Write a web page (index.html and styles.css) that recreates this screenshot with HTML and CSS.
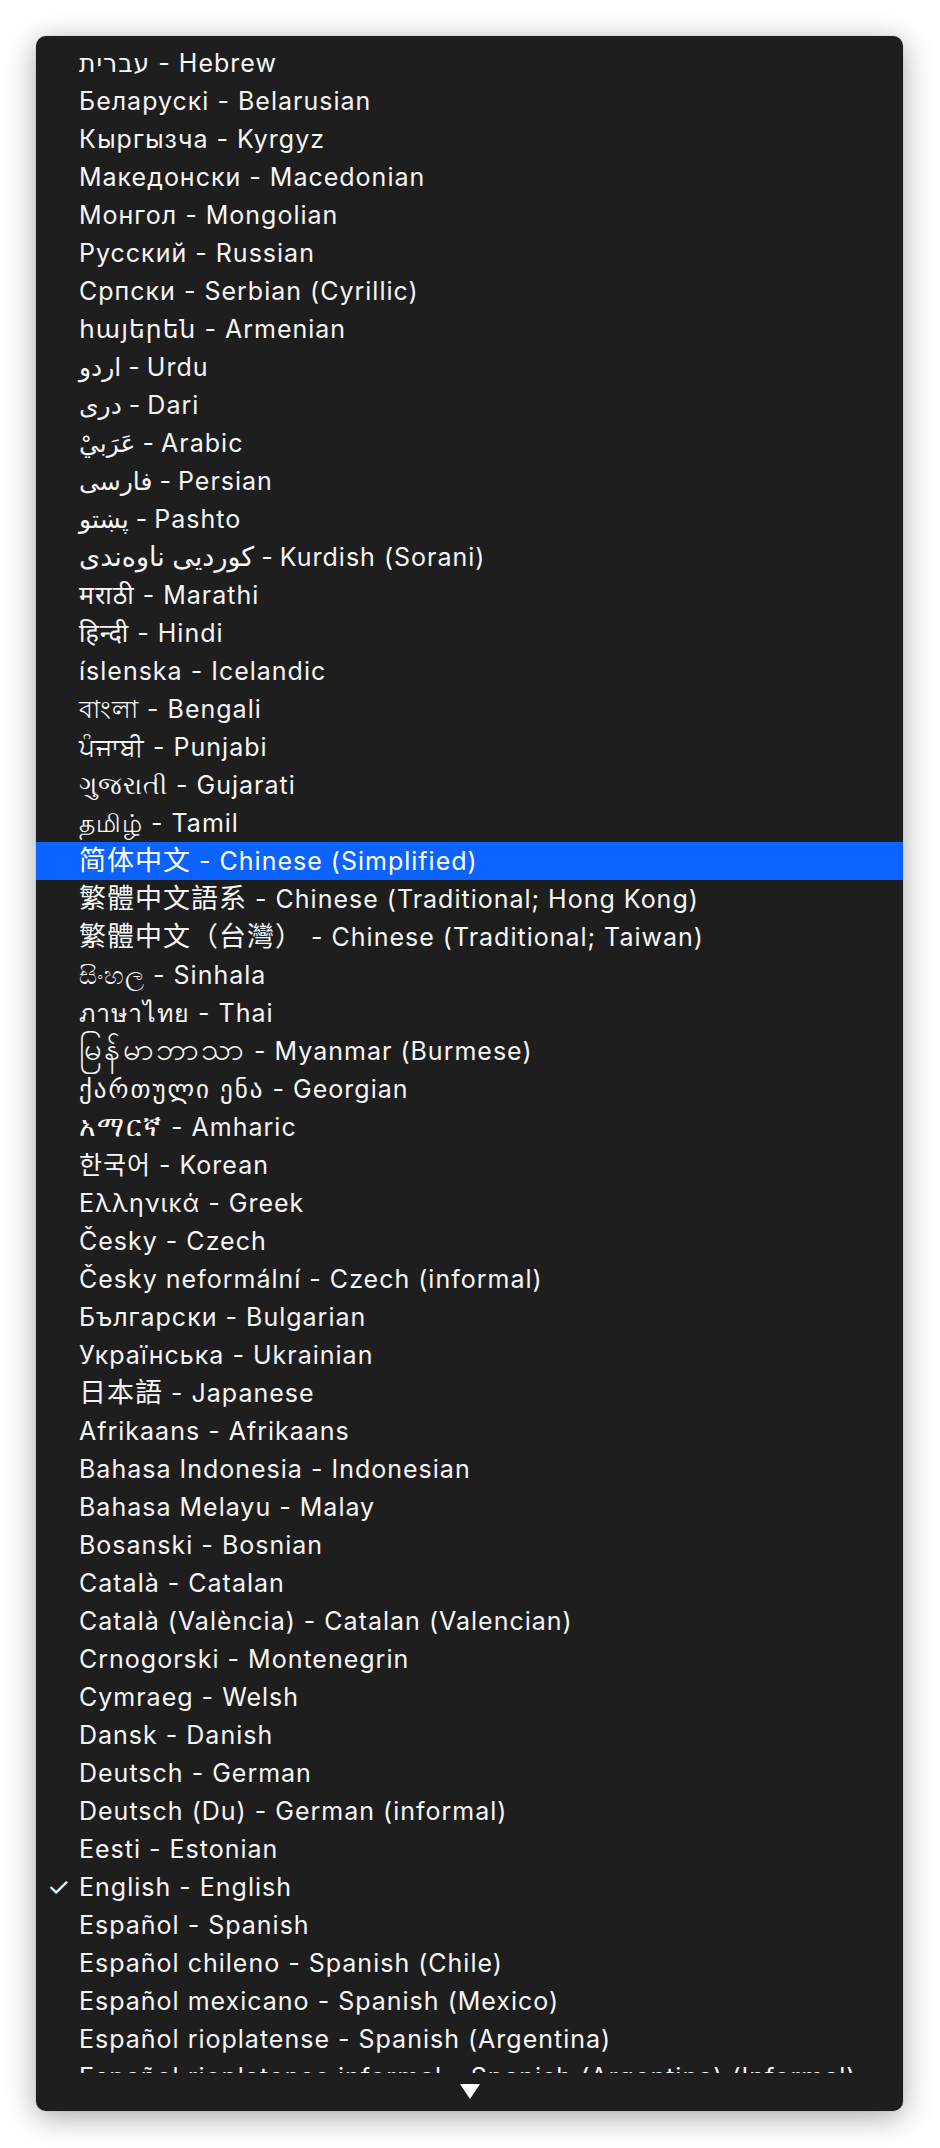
FILE: index.html
```html
<!DOCTYPE html>
<html lang="en">
<head>
<meta charset="utf-8">
<title>Language menu</title>
<link rel="stylesheet" href="styles.css">
</head>
<body>
<div class="stage">
  <div class="menu">
    <ul class="list">
      <li class="item">עברית - Hebrew</li>
      <li class="item">Беларускі - Belarusian</li>
      <li class="item">Кыргызча - Kyrgyz</li>
      <li class="item">Македонски - Macedonian</li>
      <li class="item">Монгол - Mongolian</li>
      <li class="item">Русский - Russian</li>
      <li class="item">Српски - Serbian (Cyrillic)</li>
      <li class="item">հայերեն - Armenian</li>
      <li class="item">اردو - Urdu</li>
      <li class="item">دری - Dari</li>
      <li class="item">عَرَبيْ - Arabic</li>
      <li class="item">فارسی - Persian</li>
      <li class="item">پښتو - Pashto</li>
      <li class="item"><span class="wide-arabic">کوردیی ناوەندی</span> - Kurdish (Sorani)</li>
      <li class="item">मराठी - Marathi</li>
      <li class="item">हिन्दी - Hindi</li>
      <li class="item">íslenska - Icelandic</li>
      <li class="item">বাংলা - Bengali</li>
      <li class="item">ਪੰਜਾਬੀ - Punjabi</li>
      <li class="item">ગુજરાતી - Gujarati</li>
      <li class="item">தமிழ் - Tamil</li>
      <li class="item item-active"><span class="cjk">简体中文</span> - Chinese (Simplified)</li>
      <li class="item"><span class="cjk">繁體中文語系</span> - Chinese (Traditional; Hong Kong)</li>
      <li class="item"><span class="cjk">繁體中文（台灣）</span> - Chinese (Traditional; Taiwan)</li>
      <li class="item">සිංහල - Sinhala</li>
      <li class="item">ภาษาไทย - Thai</li>
      <li class="item"><span class="myanmar">မြန်မာဘာသာ</span> - Myanmar (Burmese)</li>
      <li class="item"><span class="georgian">ქართული ენა</span> - Georgian</li>
      <li class="item"><span class="ethiopic">አማርኛ</span> - Amharic</li>
      <li class="item">한국어 - Korean</li>
      <li class="item">Ελληνικά - Greek</li>
      <li class="item">Česky - Czech</li>
      <li class="item">Česky neformální - Czech (informal)</li>
      <li class="item">Български - Bulgarian</li>
      <li class="item">Українська - Ukrainian</li>
      <li class="item"><span class="cjk">日本語</span> - Japanese</li>
      <li class="item">Afrikaans - Afrikaans</li>
      <li class="item">Bahasa Indonesia - Indonesian</li>
      <li class="item">Bahasa Melayu - Malay</li>
      <li class="item">Bosanski - Bosnian</li>
      <li class="item">Català - Catalan</li>
      <li class="item">Català (València) - Catalan (Valencian)</li>
      <li class="item">Crnogorski - Montenegrin</li>
      <li class="item">Cymraeg - Welsh</li>
      <li class="item">Dansk - Danish</li>
      <li class="item">Deutsch - German</li>
      <li class="item">Deutsch (Du) - German (informal)</li>
      <li class="item">Eesti - Estonian</li>
      <li class="item item-checked"><span class="check">✓</span>English - English</li>
      <li class="item">Español - Spanish</li>
      <li class="item">Español chileno - Spanish (Chile)</li>
      <li class="item">Español mexicano - Spanish (Mexico)</li>
      <li class="item">Español rioplatense - Spanish (Argentina)</li>
      <li class="item">Español rioplatense informal - Spanish (Argentina) (Informal)</li>
    </ul>
    <div class="scroll-down">
      <svg class="arrow" width="20" height="15" viewBox="0 0 20 15"><polygon points="0,0 20,0 10,15" fill="#ffffff"/></svg>
    </div>
  </div>
</div>
</body>
</html>
```

FILE: styles.css
```css
html, body {
  margin: 0;
  padding: 0;
  background: #ffffff;
}

.stage {
  padding: 36px 37px 37px 36px;
}

.menu {
  width: 867px;
  height: 2075px;
  background: #1e1e1e;
  border-radius: 10px;
  box-shadow: 0 6px 30px rgba(0, 0, 0, 0.35), 0 0 1px rgba(0, 0, 0, 0.4);
  overflow: hidden;
  display: flex;
  flex-direction: column;
  font-family: Inter, "Noto Sans", "DejaVu Sans", "Noto Sans CJK SC", sans-serif;
  font-size: 25px;
  letter-spacing: 1px;
  color: #f6f6f6;
}

.list {
  list-style: none;
  margin: 0;
  padding: 8px 0 0 0;
  height: 2029px;
  overflow: hidden;
  flex: none;
}

.item {
  position: relative;
  height: 38px;
  line-height: 38px;
  padding-left: 43px;
  white-space: nowrap;
}

.item-active {
  background: #0d63ff;
  color: #ffffff;
}

.cjk {
  font-family: "Noto Sans CJK SC", sans-serif;
  font-size: 27px;
  line-height: 0;
}

.myanmar {
  font-size: 31px;
  letter-spacing: 2px;
  line-height: 0;
}

.georgian {
  letter-spacing: 2px;
}

.ethiopic {
  font-size: 28px;
  letter-spacing: 2px;
  line-height: 0;
}

.wide-arabic {
  font-size: 27px;
  line-height: 0;
}

.check {
  position: absolute;
  left: 11px;
  top: 0;
  font-size: 26px;
  letter-spacing: 0;
}

.scroll-down {
  flex: 1;
  display: flex;
  justify-content: center;
  padding-top: 11px;
}

.arrow {
  display: block;
}
```
